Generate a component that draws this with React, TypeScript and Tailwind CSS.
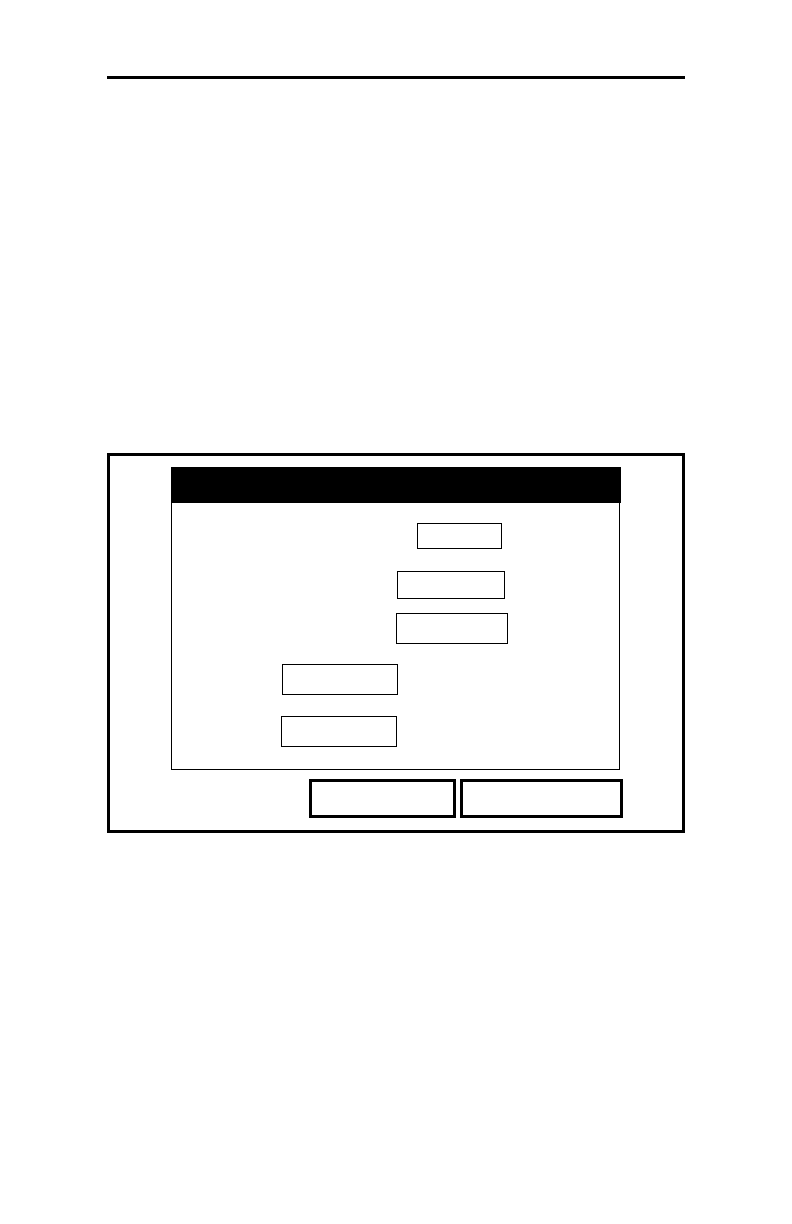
export default function App() {
  const fields = [
    { ml: 'ml-[245px]', mt: 'mt-[20px]', w: 'w-[85px]', h: 'h-[26px]' },
    { ml: 'ml-[225px]', mt: 'mt-[22px]', w: 'w-[108px]', h: 'h-[28px]' },
    { ml: 'ml-[224px]', mt: 'mt-[14px]', w: 'w-[112px]', h: 'h-[31px]' },
    { ml: 'ml-[110px]', mt: 'mt-[20px]', w: 'w-[116px]', h: 'h-[31px]' },
    { ml: 'ml-[109px]', mt: 'mt-[21px]', w: 'w-[116px]', h: 'h-[31px]' },
  ]

  return (
    <div className="w-[792px] h-[1224px] bg-white overflow-hidden" style={{ fontFamily: '"Liberation Sans", Arial, sans-serif' }}>
      {/* page header rule */}
      <div className="mt-[76px] ml-[107px] w-[578px] h-[3px] bg-black" />

      {/* screen frame */}
      <div className="mt-[374px] ml-[107px] w-[578px] h-[380px] border-[3px] border-black pt-[11px] pl-[61px]">
        <div className="flex flex-col">
          <div className="w-[450px] h-[36px] bg-black" />
          <div className="w-[449px] h-[267px] border-x border-b border-black flex flex-col">
            {fields.map((f, i) => (
              <div key={i} className={`${f.ml} ${f.mt} ${f.w} ${f.h} border border-black bg-white`} />
            ))}
          </div>
        </div>

        {/* soft keys */}
        <div className="mt-[9px] ml-[138px] flex gap-[4px]">
          <div className="w-[147px] h-[39px] border-[3px] border-black" />
          <div className="w-[163px] h-[39px] border-[3px] border-black" />
        </div>
      </div>
    </div>
  )
}
